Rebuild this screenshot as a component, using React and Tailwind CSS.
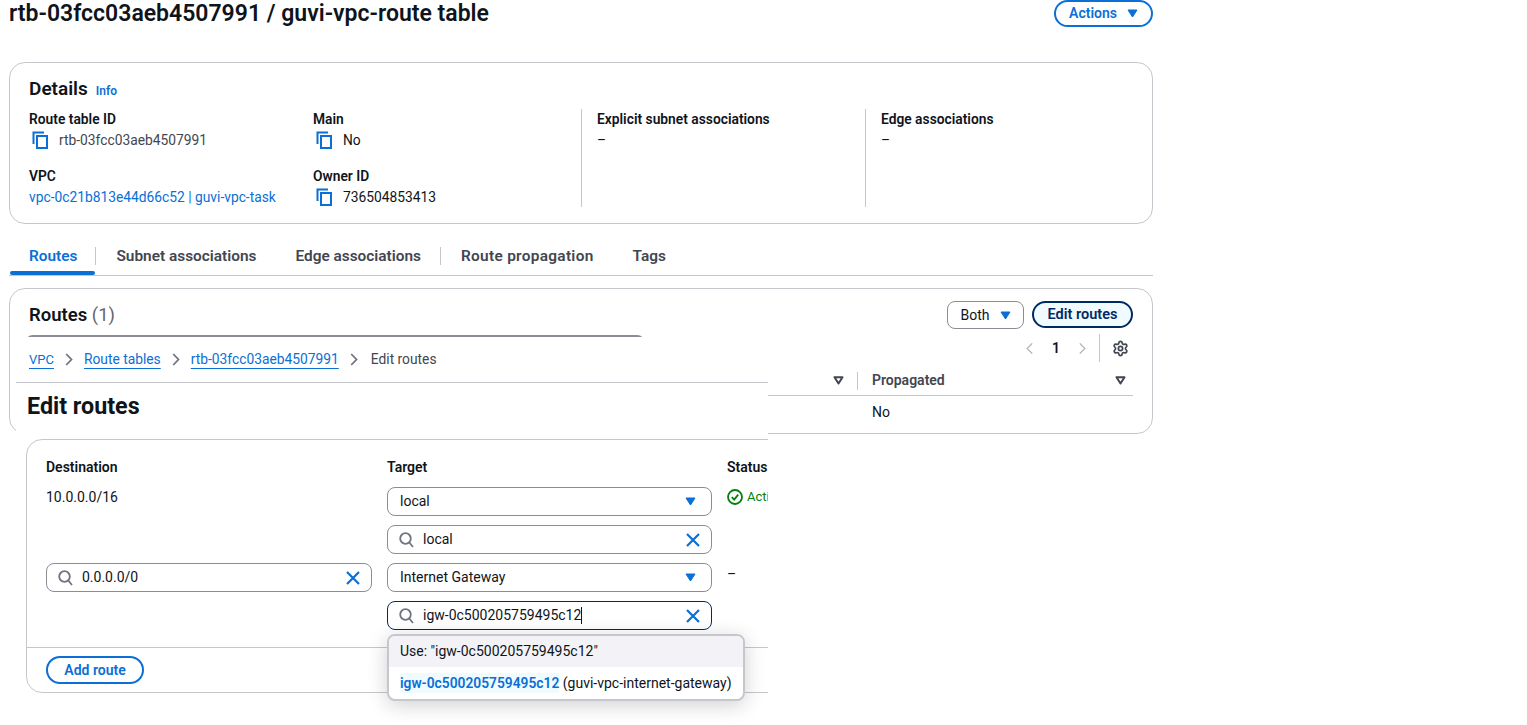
import React from "react";
import { Settings, ChevronLeft, ChevronRight } from "lucide-react";

const Copy = () => (
  <svg width="16" height="18" viewBox="0 0 16 18" fill="none" stroke="#0a6fd6" strokeWidth="2" className="shrink-0">
    <path d="M1.5 13V1.5H12" />
    <rect x="5" y="5" width="10" height="12" />
  </svg>
);
const Caret = ({ c = "#0a6fd6" }) => (
  <svg width="11" height="9" viewBox="0 0 11 9" className="shrink-0"><path d="M1 1H10L5.5 8Z" fill={c} stroke={c} strokeWidth="1" strokeLinejoin="round" /></svg>
);
const Filter = () => (
  <svg width="11" height="9" viewBox="0 0 11 9" fill="none" stroke="#424650" strokeWidth="2" className="shrink-0"><path d="M1.5 1.2H9.5L5.5 7.5Z" strokeLinejoin="round" /></svg>
);
const Search = () => (
  <svg width="15" height="16" viewBox="0 0 15 16" fill="none" stroke="#6f7480" strokeWidth="1.8" className="shrink-0">
    <circle cx="6.5" cy="6.5" r="5.3" /><path d="M10.3 10.5L14 15" />
  </svg>
);
const Clear = () => (
  <svg width="14" height="14" viewBox="0 0 14 14" fill="none" stroke="#0a6fd6" strokeWidth="2.2" className="shrink-0"><path d="M1 1L13 13M13 1L1 13" /></svg>
);
const Sep = () => (
  <svg width="8" height="13" viewBox="0 0 8 13" fill="none" stroke="#70747e" strokeWidth="1.8" className="shrink-0"><path d="M1.2 1L6.5 6.5L1.2 12" /></svg>
);

const Field = ({ label, children }) => (
  <div className="flex flex-col">
    <div className="text-[13.8px] leading-[20px] font-semibold text-[#0f141a]">{label}</div>
    <div className="text-[13.8px] leading-[20px] mt-[1px] text-[#0f141a]">{children}</div>
  </div>
);
const Copyable = ({ children }) => (
  <div className="flex items-center gap-[11px] pl-[3px]"><Copy /><span>{children}</span></div>
);
const Select = ({ children }) => (
  <div className="h-[29px] border border-[#8c8c94] rounded-[8px] flex items-center justify-between pl-[12px] pr-[15px] text-[14px] text-[#0f141a] bg-white">
    <span>{children}</span><Caret />
  </div>
);
const SearchBox = ({ children, focus }) => (
  <div className={`h-[29px] border rounded-[8px] flex items-center pl-[11px] pr-[11px] gap-[9px] text-[14px] text-[#0f141a] bg-white ${focus ? "border-[#002a66]" : "border-[#8c8c94]"}`}>
    <Search /><span className="flex-1 flex items-center">{children}</span><Clear />
  </div>
);
const Tab = ({ children, active, sep, wide }) => (
  <div className="relative flex items-center h-[34px] pb-[5px]">
    <div className={`pl-[20px] text-[15.4px] font-semibold leading-[20px] ${active ? "pr-[18px]" : "pr-[19px]"} ${wide ? "tracking-[0.3px]" : ""} ${active ? "text-[#0a6fd6]" : "text-[#424650]"}`}>{children}</div>
    {sep && <div className="w-px h-[18px] bg-[#c6c6cd]" />}
    {active && <div className="absolute left-[1px] right-px bottom-0 h-[4px] rounded-[2px] bg-[#0a6fd6]" />}
  </div>
);

export default function App() {
  return (
    <div className="relative w-[1527px] h-[725px] overflow-hidden bg-white font-['Roboto',sans-serif]">
      <div className="w-[1144px] ml-[9px] flex flex-col">
        <div className="flex justify-between items-start h-[62px]">
          <h1 className="text-[23px] leading-[28px] font-semibold text-[#0f141a]">rtb-03fcc03aeb4507991 / guvi-vpc-route table</h1>
          <div className="h-[27px] w-[99px] border-2 border-[#0a6fd6] rounded-full flex items-center justify-center gap-[10px] text-[14px] font-semibold text-[#0a6fd6]">
            Actions <Caret />
          </div>
        </div>

        <section className="h-[162px] border border-[#c6c6cd] rounded-[16px] px-[19px] pt-[14px]">
          <div className="flex items-baseline gap-[8px] h-[32px]">
            <h2 className="text-[19px] font-semibold text-[#0f141a] leading-[24px]">Details</h2>
            <span className="text-[12px] font-semibold text-[#0a6fd6]">Info</span>
          </div>
          <div className="grid grid-cols-[284px_268px_284px_1fr] h-[98px]">
            <div className="flex flex-col gap-[16px]">
              <Field label="Route table ID"><Copyable><span className="text-[#414750]">rtb-03fcc03aeb4507991</span></Copyable></Field>
              <Field label="VPC"><span className="text-[#0a6fd6]">vpc-0c21b813e44d66c52 | guvi-vpc-task</span></Field>
            </div>
            <div className="flex flex-col gap-[16px]">
              <Field label="Main"><Copyable>No</Copyable></Field>
              <Field label="Owner ID"><Copyable>736504853413</Copyable></Field>
            </div>
            <div className="border-l border-[#c6c6cd] pl-[15px]"><Field label="Explicit subnet associations">–</Field></div>
            <div className="border-l border-[#c6c6cd] pl-[15px]"><Field label="Edge associations">–</Field></div>
          </div>
        </section>

        <nav className="flex mt-[17px] h-[35px] border-b border-[#c6c6cd]">
          <Tab active sep>Routes</Tab>
          <Tab>Subnet associations</Tab>
          <Tab sep>Edge associations</Tab>
          <Tab wide>Route propagation</Tab>
          <Tab>Tags</Tab>
        </nav>

        <section className="mt-[12px] h-[146px] border border-[#c6c6cd] rounded-[16px] px-[19px] pt-[12px]">
          <div className="flex justify-between items-start">
            <h2 className="text-[18.5px] font-semibold leading-[28px] text-[#0f141a]">Routes <span className="font-normal text-[#656871]">(1)</span></h2>
            <div className="flex gap-[8px]">
              <div className="h-[28px] w-[77px] border border-[#8c8c94] rounded-[8px] flex items-center justify-center gap-[10px] text-[14px] text-[#0f141a]">Both <Caret /></div>
              <div className="h-[27px] w-[101px] border-2 border-[#002a66] bg-[#f0fbff] rounded-full flex items-center justify-center text-[14.5px] font-semibold text-[#002a66]">Edit routes</div>
            </div>
          </div>
          <div className="flex justify-between items-start h-[28px] mt-[5px] text-[#0f141a]">
            <div className="-ml-[4px] mt-[1px] w-[620px] h-[28px] border-2 border-[#8c8c94] rounded-[8px]" />
            <div className="flex items-center h-[28px]">
              <ChevronLeft size={19} strokeWidth={1.5} className="text-[#b4b4bb]" />
              <span className="mx-[13px] text-[14px] font-semibold">1</span>
              <ChevronRight size={19} strokeWidth={1.5} className="text-[#b4b4bb]" />
              <div className="w-px h-[28px] bg-[#c6c6cd] ml-[7px] mr-[12px]" />
              <Settings size={17} strokeWidth={2.4} className="text-[#424650] mr-[4px]" />
            </div>
          </div>
          <div className="flex justify-end items-center h-[34px] pt-[4px] border-b border-[#c6c6cd]">
            <Filter />
            <div className="w-px h-[18px] bg-[#c6c6cd] ml-[13px] mr-[14px]" />
            <div className="w-[261px] flex justify-between items-center pr-[7px] text-[14px] font-semibold text-[#424650]">Propagated <Filter /></div>
          </div>
          <div className="flex justify-end"><div className="w-[261px] h-[15px] overflow-hidden text-[14px] leading-[20px] mt-[6px] text-[#0f141a]">No</div></div>
        </section>
      </div>

      {/* second screenshot pasted over the first one */}
      <div className="absolute left-[16px] top-[337px] w-[752px] h-[388px] bg-white overflow-hidden">
        <div className="flex items-center h-[46px] pl-[13px] gap-[11px] border-b border-[#c6c6cd] text-[13.8px]">
          <span className="text-[13px] text-[#0a6fd6] underline underline-offset-[4px]">VPC</span><Sep />
          <span className="text-[#0a6fd6] underline underline-offset-[4px]">Route tables</span><Sep />
          <span className="text-[#0a6fd6] underline underline-offset-[4px]">rtb-03fcc03aeb4507991</span><Sep />
          <span className="ml-[2px] text-[#424650]">Edit routes</span>
        </div>
        <h1 className="text-[23.3px] leading-[30px] font-bold text-[#0f141a] pl-[11px] mt-[8px]">Edit routes</h1>

        <section className="ml-[10px] mt-[18px] w-[800px] h-[254px] border border-[#c6c6cd] rounded-[16px]">
          <div className="px-[19px] pt-[17px] h-[207px] grid grid-cols-[326px_325px_1fr] gap-x-[15px] content-start">
            <div className="text-[14px] font-semibold leading-[20px] text-[#0f141a]">Destination</div>
            <div className="text-[14px] font-semibold leading-[20px] text-[#0f141a]">Target</div>
            <div className="text-[14px] font-semibold leading-[20px] text-[#0f141a]">Status</div>

            <div className="mt-[10px] text-[14px] leading-[20px] text-[#0f141a]">10.0.0.0/16</div>
            <div className="mt-[10px] flex flex-col gap-[9px]">
              <Select>local</Select>
              <SearchBox>local</SearchBox>
            </div>
            <div className="mt-[10px] flex items-center h-[20px] gap-[4px] text-[13px] text-[#037f0c] whitespace-nowrap">
              <svg width="16" height="16" viewBox="0 0 16 16" fill="none" stroke="#037f0c" strokeWidth="1.8" className="shrink-0"><circle cx="8" cy="8" r="7" /><path d="M4.8 8.2L7.2 10.6L11.2 5.6" /></svg>
              Active
            </div>

            <div className="mt-[9px]"><SearchBox>0.0.0.0/0</SearchBox></div>
            <div className="mt-[9px] flex flex-col gap-[9px]">
              <Select>Internet Gateway</Select>
              <SearchBox focus>igw-0c500205759495c12<span className="w-px h-[17px] bg-[#0f141a]" /></SearchBox>
            </div>
            <div className="mt-[10px] text-[14px] leading-[20px] text-[#0f141a]">–</div>
          </div>
          <div className="border-t border-[#c6c6cd] pl-[19px] pt-[8px]">
            <div className="h-[28px] w-[98px] border-2 border-[#0a6fd6] rounded-full flex items-center justify-center text-[14px] font-semibold text-[#0a6fd6]">Add route</div>
          </div>
        </section>

        <div className="absolute left-[371px] top-[297px] w-[358px] h-[67px] border-2 border-[#c6c6cd] rounded-[8px] bg-white shadow-[0_4px_20px_rgba(15,20,26,0.2)] overflow-hidden text-[14px] text-[#0f141a]">
          <div className="h-[31px] pl-[11px] flex items-center bg-[#f3f3f7]">Use: "igw-0c500205759495c12"</div>
          <div className="h-[32px] pl-[11px] flex items-center whitespace-nowrap"><span className="text-[13.8px] font-semibold text-[#0a6fd6] bg-[#f0fbff]">igw-0c500205759495c12</span>&nbsp;(guvi-vpc-internet-gateway)</div>
        </div>
      </div>
    </div>
  );
}
